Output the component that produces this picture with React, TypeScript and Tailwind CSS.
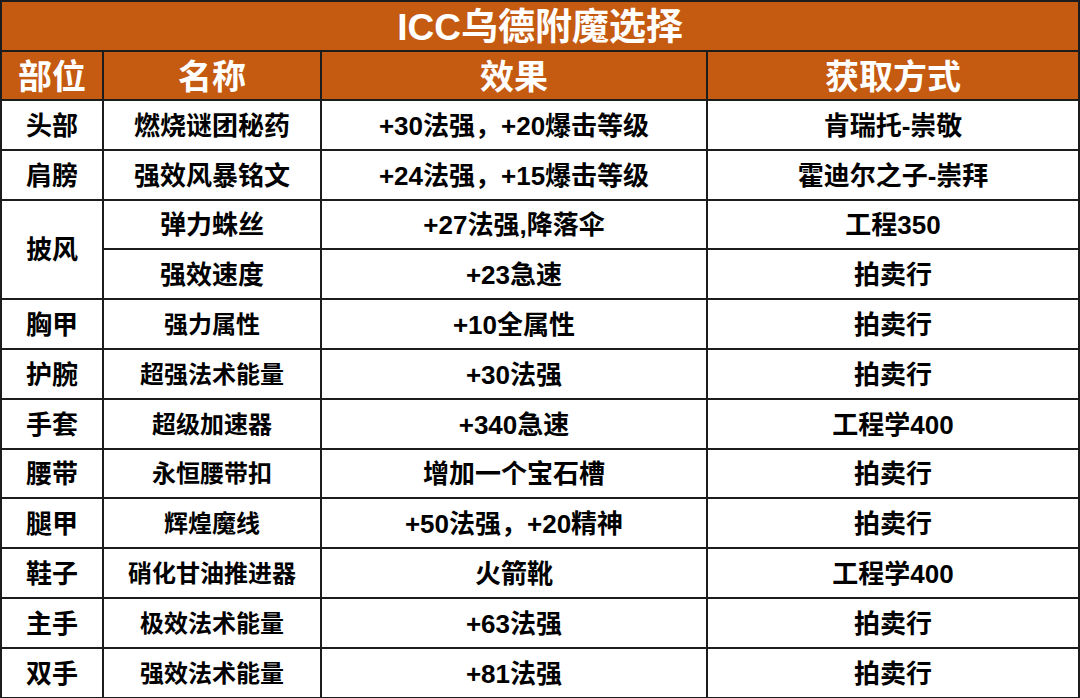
const rows: { part?: string; span?: number; name: string; small?: boolean; effect: string; source: string }[] = [
  { part: '头部', name: '燃烧谜团秘药', effect: '+30法强，+20爆击等级', source: '肯瑞托-崇敬' },
  { part: '肩膀', name: '强效风暴铭文', effect: '+24法强，+15爆击等级', source: '霍迪尔之子-崇拜' },
  { part: '披风', span: 2, name: '弹力蛛丝', effect: '+27法强,降落伞', source: '工程350' },
  { name: '强效速度', effect: '+23急速', source: '拍卖行' },
  { part: '胸甲', name: '强力属性', small: true, effect: '+10全属性', source: '拍卖行' },
  { part: '护腕', name: '超强法术能量', small: true, effect: '+30法强', source: '拍卖行' },
  { part: '手套', name: '超级加速器', small: true, effect: '+340急速', source: '工程学400' },
  { part: '腰带', name: '永恒腰带扣', small: true, effect: '增加一个宝石槽', source: '拍卖行' },
  { part: '腿甲', name: '辉煌魔线', small: true, effect: '+50法强，+20精神', source: '拍卖行' },
  { part: '鞋子', name: '硝化甘油推进器', small: true, effect: '火箭靴', source: '工程学400' },
  { part: '主手', name: '极效法术能量', small: true, effect: '+63法强', source: '拍卖行' },
  { part: '双手', name: '强效法术能量', small: true, effect: '+81法强', source: '拍卖行' },
];

const cell = 'border-2 border-[#1c1c1c] text-center align-middle px-0 pb-0 pt-[2px]';

export default function App() {
  return (
    <div
      className="w-[1080px] h-[698px] bg-white overflow-hidden"
      style={{ fontFamily: '"Liberation Sans", "Noto Sans CJK SC", sans-serif' }}
    >
      <table className="table-fixed border-collapse w-[1078px] h-[698px] font-bold">
        <colgroup>
          <col className="w-[102px]" />
          <col className="w-[218px]" />
          <col className="w-[386px]" />
          <col className="w-[372px]" />
        </colgroup>
        <thead className="bg-[#c55a11] text-white">
          <tr className="h-[50px]">
            <th colSpan={4} className={`${cell} text-[37px] leading-none`}>
              ICC乌德附魔选择
            </th>
          </tr>
          <tr className="h-[49px]">
            <th className={`${cell} text-[34px] leading-none`}>部位</th>
            <th className={`${cell} text-[34px] leading-none`}>名称</th>
            <th className={`${cell} text-[34px] leading-none`}>效果</th>
            <th className={`${cell} text-[34px] leading-none`}>获取方式</th>
          </tr>
        </thead>
        <tbody className="text-black">
          {rows.map((r, i) => (
            <tr key={i} className="h-[49.8px]">
              {r.part && (
                <td rowSpan={r.span ?? 1} className={`${cell} text-[26px] leading-none`}>
                  {r.part}
                </td>
              )}
              <td className={`${cell} ${r.small ? 'text-[24px]' : 'text-[26px]'} leading-none`}>{r.name}</td>
              <td className={`${cell} text-[26px] leading-none`}>{r.effect}</td>
              <td className={`${cell} text-[26px] leading-none`}>{r.source}</td>
            </tr>
          ))}
        </tbody>
      </table>
    </div>
  );
}
